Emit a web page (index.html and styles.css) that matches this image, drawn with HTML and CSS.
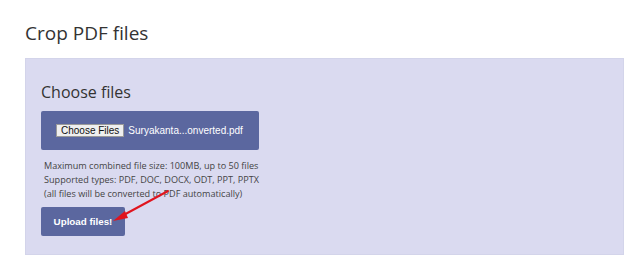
FILE: index.html
```html
<!DOCTYPE html>
<html>
<head>
<meta charset="utf-8">
<link rel="stylesheet" href="styles.css">
</head>
<body>
<div class="page">
  <h1 class="title">Crop PDF files</h1>
  <div class="panel">
    <h2 class="subtitle">Choose files</h2>
    <div class="filebox">
      <span class="choose-btn">Choose Files</span>
      <span class="filename">Suryakanta...onverted.pdf</span>
    </div>
    <div class="info">
      <div>Maximum combined file size: 100MB, up to 50 files</div>
      <div>Supported types: PDF, DOC, DOCX, ODT, PPT, PPTX</div>
      <div>(all files will be converted to PDF automatically)</div>
    </div>
    <button class="upload">Upload files!</button>
  </div>
  <svg class="arrow" width="80" height="50" viewBox="0 0 80 50">
    <line x1="68" y1="11" x2="20" y2="37" stroke="#e0141e" stroke-width="2" stroke-linecap="round"/>
    <polygon points="13,41 25,31 28,38" fill="#e0141e"/>
  </svg>
</div>
</body>
</html>
```
FILE: styles.css
```css
html, body {
  margin: 0;
  padding: 0;
  background: #ffffff;
}
.page {
  position: relative;
  padding: 20px 16px 0 25px;
  font-family: "Open Sans", "Noto Sans", sans-serif;
}
.title {
  margin: 0 0 11px 0;
  font-size: 19px;
  font-weight: 400;
  line-height: 27px;
  color: #333;
}
.panel {
  box-sizing: border-box;
  width: 599px;
  height: 197px;
  background: #dadaf0;
  border: 1px solid #d3d4ea;
  padding: 0 15px;
  display: flex;
  flex-direction: column;
  align-items: flex-start;
}
.subtitle {
  margin: 22px 0 7px 0;
  font-size: 16px;
  font-weight: 400;
  line-height: 23px;
  color: #333;
}
.filebox {
  box-sizing: border-box;
  width: 218px;
  height: 39px;
  background: #5b679f;
  border-radius: 2px;
  display: flex;
  align-items: center;
  padding: 0 0 1px 15px;
  gap: 4px;
  font-family: "Liberation Sans", Arial, sans-serif;
  font-size: 10px;
}
.choose-btn {
  background: #efefef;
  border: 1px solid #9a9a9a;
  color: #111;
  padding: 0 4px;
  line-height: 11px;
}
.filename {
  color: #fff;
}
.info {
  margin: 9px 0 0 3px;
  font-size: 9.1px;
  line-height: 14px;
  color: #444;
}
.upload {
  margin-top: 6px;
  width: 84px;
  height: 29px;
  background: #5b679f;
  border: none;
  border-radius: 2px;
  color: #fff;
  font-family: "Liberation Sans", Arial, sans-serif;
  font-weight: 700;
  font-size: 9.8px;
  padding: 0;
}
.arrow {
  position: absolute;
  left: 100px;
  top: 180px;
}
```
